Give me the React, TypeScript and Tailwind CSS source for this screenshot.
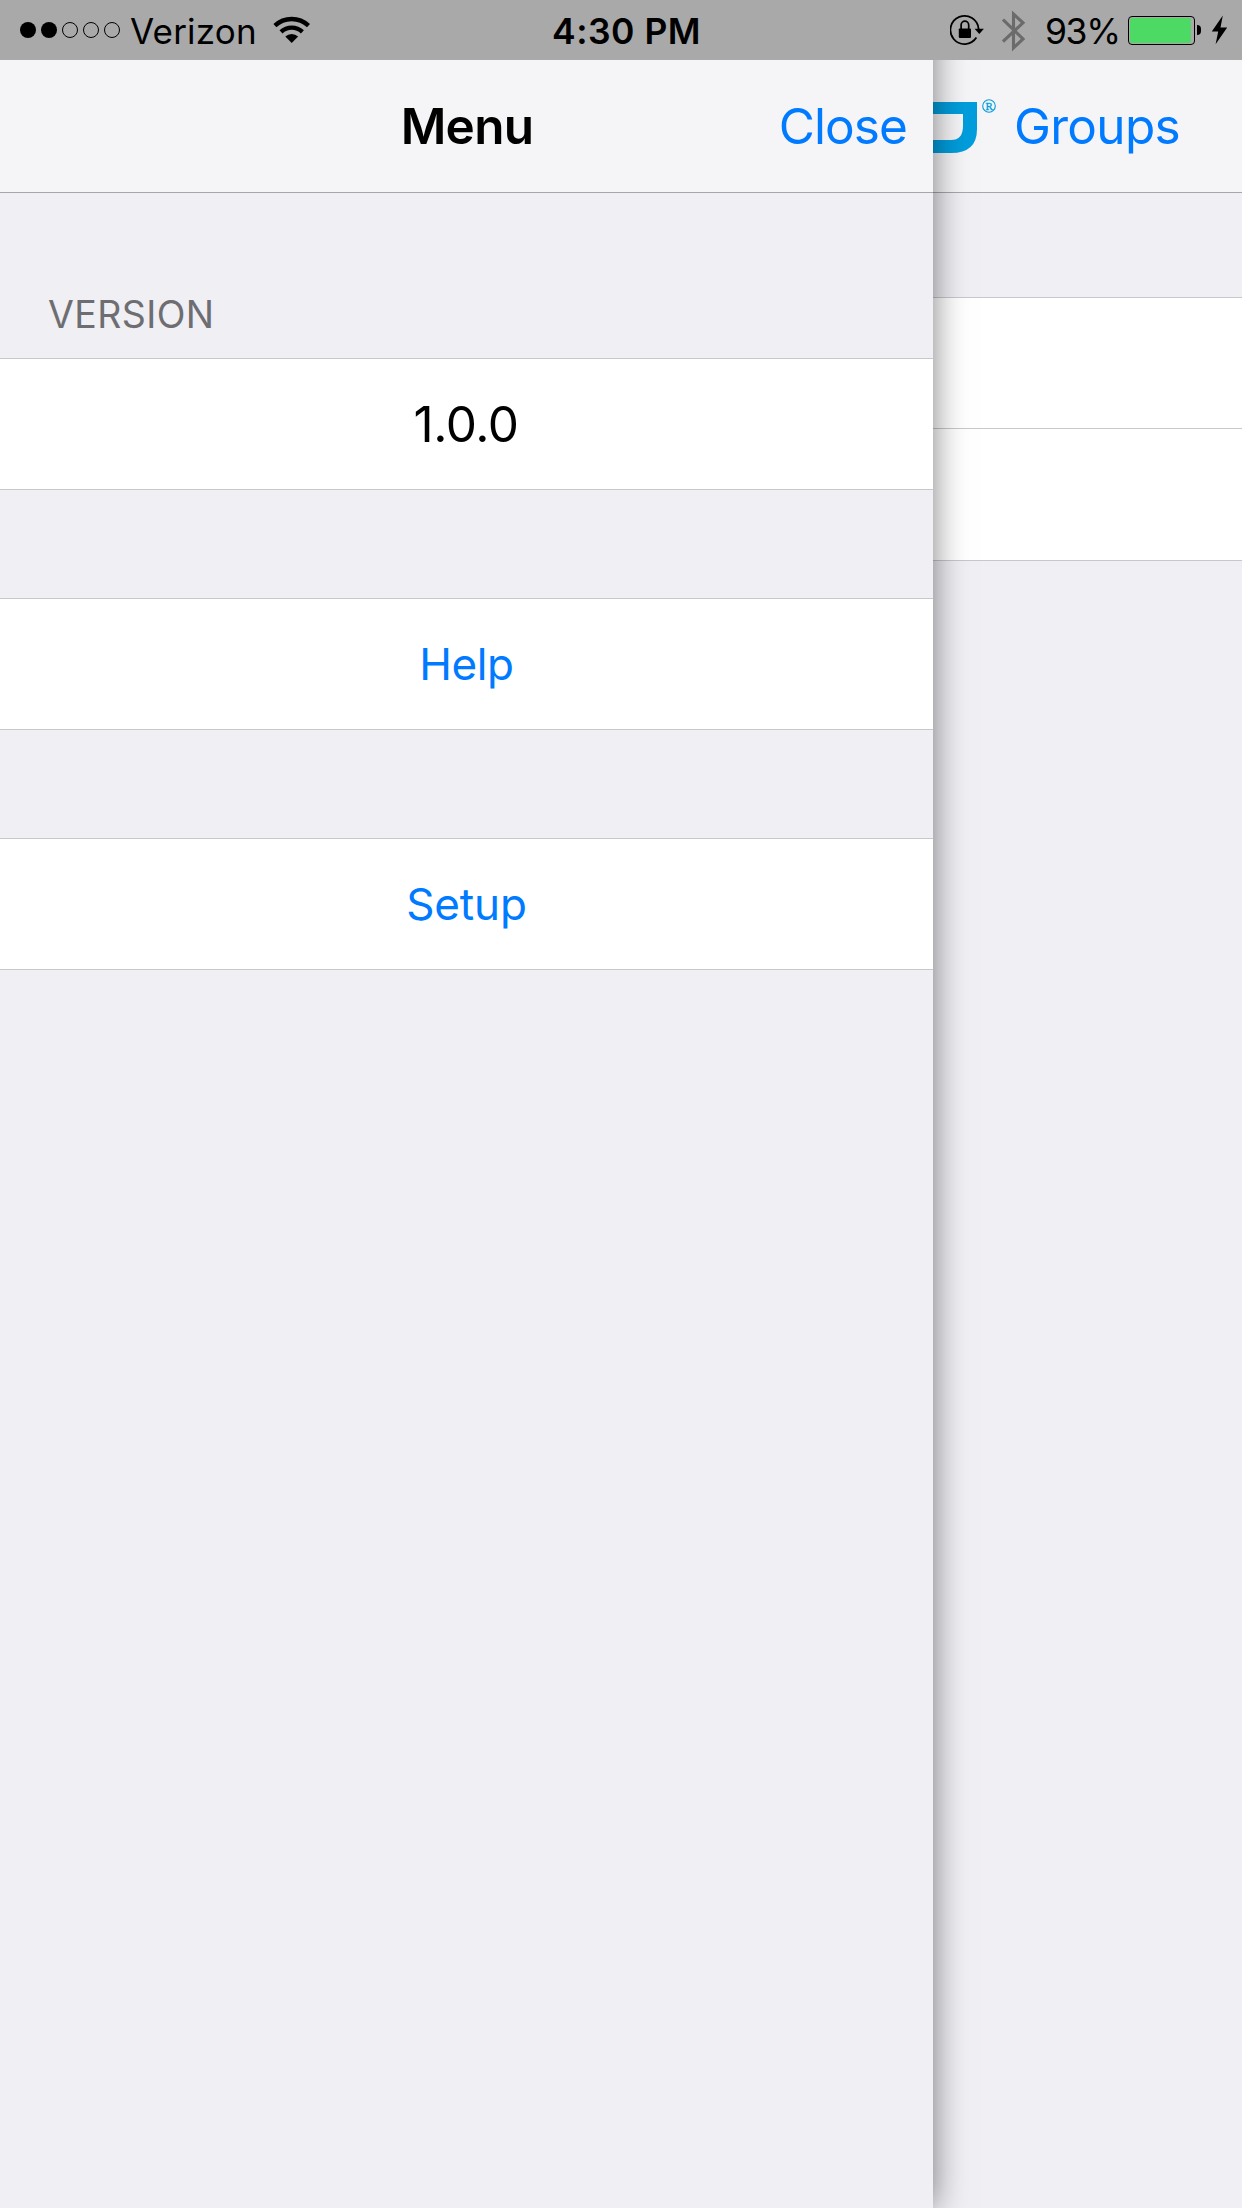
import type { ReactNode } from "react";

function SignalDots() {
  return (
    <div className="flex gap-[5px]" aria-label="Signal strength">
      <span className="size-4 rounded-full bg-black" />
      <span className="size-4 rounded-full bg-black" />
      <span className="size-4 rounded-full border border-black" />
      <span className="size-4 rounded-full border border-black" />
      <span className="size-4 rounded-full border border-black" />
    </div>
  );
}

function WifiIcon() {
  return (
    <svg className="h-[28px] w-[38px]" viewBox="0 0 38 28">
      <g fill="none" stroke="#000" strokeWidth="4.4">
        <path d="M1.9 9.6 A24.5 24.5 0 0 1 35.5 9.6" />
        <path d="M8 15.9 A15.6 15.6 0 0 1 29.4 15.9" />
      </g>
      <path d="M12.3 20.6 A9 9 0 0 1 25.1 20.6 L18.7 27 Z" fill="#000" />
    </svg>
  );
}

function RotationLockIcon() {
  return (
    <svg className="h-[32px] w-[44px]" viewBox="0 0 44 32">
      <path d="M26.4 23.6 A14.1 14.1 0 1 1 28.6 15" fill="none" stroke="#000" strokeWidth="1.8" />
      <path d="M24.6 14.7 H33.9 L29.3 20 Z" fill="#000" />
      <rect x="8.8" y="14.4" width="12.2" height="9.5" rx="0.8" fill="#000" />
      <path d="M11.1 15 V11 A3.8 3.8 0 0 1 18.7 11 V15" fill="none" stroke="#000" strokeWidth="1.7" />
    </svg>
  );
}

function BluetoothIcon() {
  return (
    <svg className="h-[42px] w-[24px]" viewBox="0 0 24 42">
      <path
        d="M1 9.5 L21 29 L11.5 38 V4 L21 12.8 L1 31.5"
        fill="none"
        stroke="#6b6b6b"
        strokeWidth="3.1"
      />
    </svg>
  );
}

function Battery() {
  return (
    <div className="flex items-center">
      <div className="h-[29px] w-[67px] rounded-[4px] border border-black p-px">
        <div className="h-full w-[61px] rounded-[2.5px] bg-[#4cd964]" />
      </div>
      <span className="ml-[2px] h-[10px] w-[4px] rounded-r-full bg-black" />
    </div>
  );
}

function BoltIcon() {
  return (
    <svg className="h-[30px] w-[17px]" viewBox="0 0 17 30">
      <path d="M11.8 0.5 L0.8 16.4 H7.2 L4.6 29.2 L16.2 12.6 H9.5 Z" fill="#000" />
    </svg>
  );
}

function StatusBar() {
  return (
    <header className="relative z-20 flex h-[60px] shrink-0 items-center bg-[#a9a9a9] whitespace-nowrap text-black">
      <div className="flex h-full w-[552px] items-center pl-[20px]">
        <SignalDots />
        <span className="mt-[3px] ml-[10px] w-[143px] text-[35px] leading-none tracking-[0.2px]">Verizon</span>
        <WifiIcon />
      </div>
      <span className="mt-[3px] w-[398px] text-[35.5px] leading-none font-[560] tracking-[0.5px]">4:30 PM</span>
      <div className="flex h-full items-center">
        <RotationLockIcon />
        <span className="mt-[1px] ml-[8px]"><BluetoothIcon /></span>
        <span className="mt-[3px] ml-[19px] w-[83px] text-[35.5px] leading-none tracking-[-1.4px]">93%</span>
        <Battery />
        <span className="ml-[10px]"><BoltIcon /></span>
      </div>
    </header>
  );
}

function Cell({ children, className = "" }: { children?: ReactNode; className?: string }) {
  return (
    <div className={`flex h-[132px] items-center justify-center border-y border-[#c8c7cc] bg-white ${className}`}>
      {children}
    </div>
  );
}

function LogoMark() {
  return (
    <svg className="h-[60px] w-[66px]" viewBox="933 96 66 60">
      <path d="M920 102 H977 V129 Q977 153 951 153 H920 V140 H951 Q963 140 963 126 V114 H920 Z" fill="#009ddc" />
      <circle cx="989" cy="106" r="6.3" fill="none" stroke="#009ddc" strokeWidth="1.1" />
      <text x="989.2" y="109.8" textAnchor="middle" fontSize="11" fontFamily="Liberation Serif, serif" fill="#009ddc" stroke="#009ddc" strokeWidth="0.3">
        R
      </text>
    </svg>
  );
}

function MenuPanel() {
  return (
    <aside className="relative z-10 -mt-[60px] flex w-[933px] shrink-0 flex-col bg-[#efeff4] pt-[60px] shadow-[0_0_32px_rgba(0,0,0,0.5)]">
      <nav className="grid h-[133px] shrink-0 grid-cols-[1fr_auto_1fr] items-center border-b border-[#a7a7ab] bg-[#f5f5f8] text-[49.5px] leading-none">
        <span />
        <h1 className="pt-[2px] pl-px font-semibold tracking-[-0.7px]">Menu</h1>
        <button className="justify-self-end pt-[2px] pr-[26px] tracking-[-0.9px] text-[#007aff]">Close</button>
      </nav>
      <h2 className="mt-[102px] h-[63px] pl-[48px] text-[37.5px] leading-[40px] tracking-[0.4px] text-[#6d6d72]">VERSION</h2>
      <Cell className="pr-px text-[49.5px] tracking-[-0.5px] text-black">1.0.0</Cell>
      <Cell className="mt-[108px] text-[44px] tracking-[-0.4px] text-[#007aff]">Help</Cell>
      <Cell className="mt-[108px] text-[44px] tracking-[-0.1px] text-[#007aff]">Setup</Cell>
    </aside>
  );
}

function GroupsPage() {
  return (
    <main className="flex min-w-0 flex-1 flex-col bg-[#efeff4]">
      <nav className="flex h-[133px] shrink-0 items-center border-b border-[#a7a7ab] bg-[#f5f5f8] text-[49.5px] leading-none">
        <LogoMark />
        <button className="ml-[15px] pt-[2px] tracking-[-0.7px] text-[#007aff]">Groups</button>
      </nav>
      <Cell className="mt-[104px]" />
      <Cell className="-mt-px h-[133px]" />
    </main>
  );
}

export default function App() {
  return (
    <div className="flex h-[2208px] w-[1242px] flex-col overflow-hidden bg-[#efeff4] font-['Inter',sans-serif]">
      <StatusBar />
      <div className="flex min-h-0 flex-1">
        <MenuPanel />
        <GroupsPage />
      </div>
    </div>
  );
}
